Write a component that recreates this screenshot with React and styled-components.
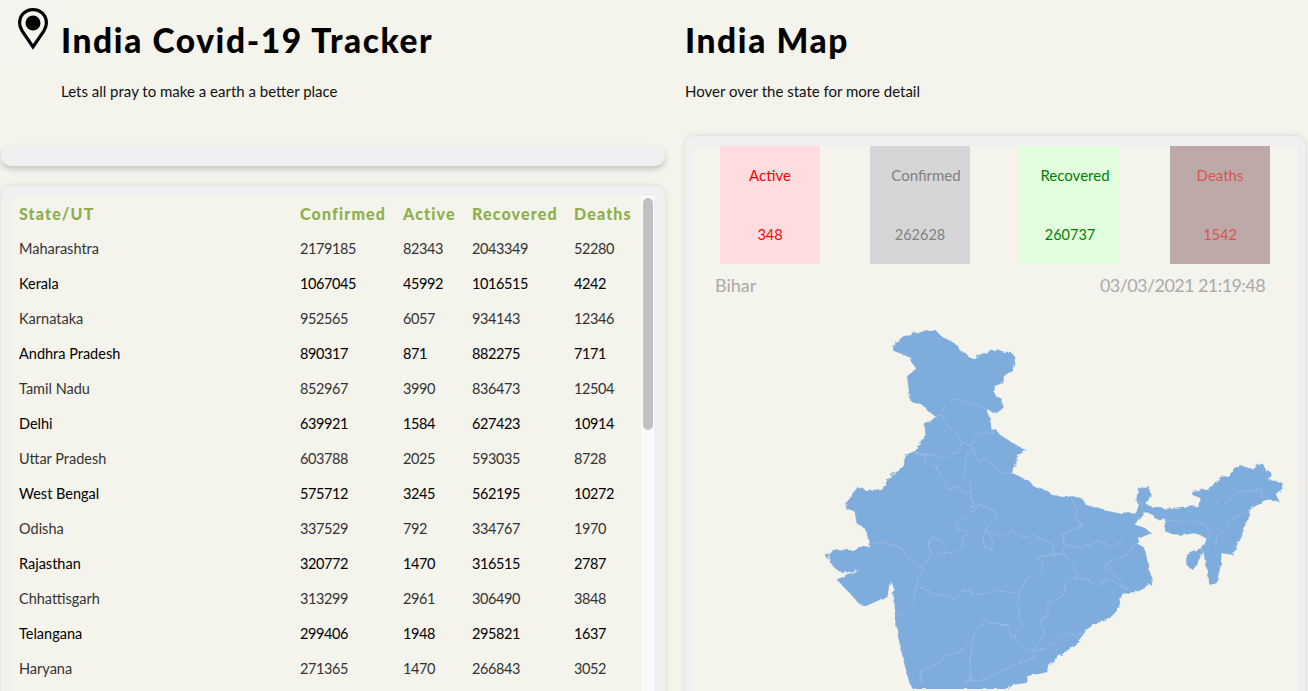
import React from "react";
import styled, { createGlobalStyle } from "styled-components";

const GlobalStyle = createGlobalStyle`
  html, body {
    margin: 0;
    padding: 0;
    height: 691px;
    overflow: hidden;
    background-color: #f4f3ec;
    font-family: Lato, "Open Sans", sans-serif;
  }
`;

const Page = styled.div`
  display: grid;
  grid-template-columns: 664px 620px;
  column-gap: 20px;
  padding-left: 1px;
  height: 691px;
  overflow: hidden;
`;

const Column = styled.div`
  display: flex;
  flex-direction: column;
  min-width: 0;
`;

const Header = styled.header`
  height: ${(p) => p.$height}px;
  flex: none;
  display: flex;
`;

const PinBox = styled.div`
  width: 60px;
  height: 60px;
  margin-left: -1px;
  margin-right: 1px;
  flex: none;
  background-color: #f5f4ee;
  padding: 8px 0 0 18px;
  box-sizing: border-box;
`;

const Title = styled.h1`
  margin: 21px 0 0;
  font-size: 33.5px;
  line-height: 38px;
  font-weight: 900;
  color: #000;
  letter-spacing: 1.6px;
  white-space: nowrap;
`;

const Subtitle = styled.p`
  margin: 23px 0 0;
  font-size: 15px;
  line-height: 18px;
  color: #111;
  white-space: nowrap;
`;

const TitleBlock = styled.div`
  padding-left: ${(p) => p.$indent || 0}px;
`;

const SearchBar = styled.div`
  height: 20px;
  flex: none;
  background-color: #f0f0f0;
  border-radius: 10px;
  box-shadow: 0 3px 6px rgba(0, 0, 0, 0.2);
  margin-bottom: 20px;
`;

const Panel = styled.section`
  flex: 1;
  border-radius: 10px;
  background-color: #f0f0f0;
  padding: 10px 11px 0 10px;
  box-shadow: 0 0 6px rgba(0, 0, 0, 0.12);
  display: flex;
  min-height: 0;
`;

const TableArea = styled.div`
  flex: 1;
  background-color: #f4f3ec;
  padding: 0 0 0 8px;
  height: 600px;
`;

const Table = styled.table`
  border-collapse: collapse;
  table-layout: fixed;
  width: 100%;
  margin-top: -1px;
`;

const HeadCell = styled.th`
  width: ${(p) => p.$width}px;
  padding: 0;
  height: 36px;
  text-align: left;
  font-size: 16px;
  font-weight: 900;
  color: #8db04a;
  letter-spacing: 1.15px;
  white-space: nowrap;
`;

const Row = styled.tr`
  color: ${(p) => (p.$even ? "#000" : "#333")};
`;

const Cell = styled.td`
  padding: 0;
  height: 35px;
  font-size: 14.5px;
  letter-spacing: ${(p) => (p.$num ? "-0.43px" : "0")};
  white-space: nowrap;
`;

const ScrollTrack = styled.div`
  width: 13px;
  flex: none;
  background-color: #fafafa;
  padding: 2px 1px 0 2px;
  box-sizing: border-box;
`;

const ScrollThumb = styled.div`
  height: 232px;
  border-radius: 5px;
  background-color: #c1c1c1;
`;

const MapPanel = styled.section`
  flex: 1;
  border-radius: 10px;
  background-color: #f0f0f0;
  padding: 10px 8px 0 9px;
  box-shadow: 0 0 6px rgba(0, 0, 0, 0.12);
`;

const MapInner = styled.div`
  background-color: #f4f3ec;
  height: 600px;
`;

const Stats = styled.div`
  display: flex;
  gap: 50px;
  padding-left: 26px;
`;

const StatBox = styled.div`
  width: 100px;
  height: 118px;
  background-color: ${(p) => p.$bg};
  color: ${(p) => p.$color};
  font-size: 15px;
  text-align: center;
  white-space: nowrap;
`;

const StatLabel = styled.div`
  padding-top: 20px;
  padding-left: ${(p) => p.$indent}px;
  line-height: 18px;
  height: 59px;
  box-sizing: border-box;
`;

const StatValue = styled.div`
  padding-top: 21px;
  line-height: 18px;
  font-size: 14.5px;
`;

const InfoRow = styled.div`
  display: flex;
  justify-content: space-between;
  padding: 9px 32px 0 21px;
  font-size: 18px;
  line-height: 24px;
  color: #aaa;
`;

const DateText = styled.span`
  letter-spacing: -0.58px;
`;

const MapSvg = styled.svg`
  display: block;
  margin: 31px 0 0 129px;
`;

const rows = [
  ["Maharashtra", 2179185, 82343, 2043349, 52280],
  ["Kerala", 1067045, 45992, 1016515, 4242],
  ["Karnataka", 952565, 6057, 934143, 12346],
  ["Andhra Pradesh", 890317, 871, 882275, 7171],
  ["Tamil Nadu", 852967, 3990, 836473, 12504],
  ["Delhi", 639921, 1584, 627423, 10914],
  ["Uttar Pradesh", 603788, 2025, 593035, 8728],
  ["West Bengal", 575712, 3245, 562195, 10272],
  ["Odisha", 337529, 792, 334767, 1970],
  ["Rajasthan", 320772, 1470, 316515, 2787],
  ["Chhattisgarh", 313299, 2961, 306490, 3848],
  ["Telangana", 299406, 1948, 295821, 1637],
  ["Haryana", 271365, 1470, 266843, 3052],
];

const outline =
  "280,95 283,82 300,65 310,55 335,52 338,44 352,47 380,37 392,40 408,37 420,50 432,60 445,65 462,75 475,85 482,98 497,105 510,120 525,120 545,108 570,100 595,95 612,102 632,102 647,118 643,135 637,160 625,165 612,175 610,195 585,203 583,222 590,237 605,240 606,258 612,268 600,278 590,285 578,283 565,273 560,280 572,300 575,335 590,335 600,350 615,360 635,372 650,382 680,397 660,408 650,420 650,437 640,450 637,467 655,475 690,490 700,505 720,512 745,520 755,530 790,538 820,535 850,545 858,560 880,568 900,570 920,578 965,588 985,583 1005,588 1012,580 1018,560 1010,550 1015,515 1030,507 1048,505 1052,530 1045,550 1040,560 1060,568 1085,568 1097,573 1150,567 1200,565 1203,540 1178,530 1180,518 1230,515 1245,495 1262,478 1290,472 1305,450 1322,442 1360,455 1375,442 1390,437 1398,460 1413,462 1408,487 1432,490 1450,495 1450,510 1428,528 1440,553 1425,545 1400,545 1385,552 1350,575 1345,610 1330,630 1327,655 1312,680 1300,710 1265,705 1264,740 1255,775 1250,795 1230,800 1225,765 1215,720 1212,700 1195,730 1190,745 1180,755 1165,745 1160,725 1165,705 1190,695 1210,690 1222,662 1190,645 1150,650 1120,648 1097,640 1095,600 1080,607 1065,600 1060,590 1040,582 1030,585 1018,600 1005,620 1035,630 1055,645 1020,660 1010,675 1035,690 1045,740 1055,780 1058,805 1045,795 1035,810 1015,820 985,825 955,838 962,865 945,885 925,905 890,915 865,930 850,950 830,975 800,1000 770,1020 745,1040 743,1062 715,1068 690,1072 675,1095 640,1100 625,1113 340,1113 330,1095 318,1050 305,1000 295,950 287,905 290,880 280,840 285,815 275,790 268,800 265,830 240,845 200,863 180,858 150,825 112,785 145,768 165,765 180,755 130,765 105,750 90,730 90,710 103,693 145,697 165,695 190,688 208,685 210,670 195,630 172,618 165,580 137,570 140,548 160,525 175,508 190,510 200,522 225,516 248,512 265,485 275,470 298,458 312,435 320,410 345,400 360,375 378,350 375,318 395,308 410,295 385,280 375,265 333,248 327,210 322,175 350,152 337,135 335,120 300,105 282,98";

const borders = [
  "410,295 425,290 437,260 465,242 490,250 530,258 550,272 565,275",
  "425,290 445,325 470,345 485,370 520,385",
  "520,385 525,350 550,345 585,345",
  "520,385 528,415 540,428 555,420 580,440 605,465 637,465",
  "520,390 498,420 495,465 485,480 510,490 515,520 490,525 480,505 445,515 440,490 420,470 410,440 375,435 372,412 345,405",
  "485,375 475,400 440,420 410,415 385,410 345,405",
  "510,520 522,560 510,568 545,562 585,575 590,595 560,630 550,660 555,690 575,695 580,670 565,640 585,650 620,652 640,640 670,660 700,650 760,680 763,710",
  "763,710 790,705 795,680 790,650 850,620 825,600 835,575 815,540",
  "545,562 470,615 470,635 510,640 490,660 485,695 420,712 440,680 405,660 385,670 395,710 370,750",
  "205,678 250,672 305,690 325,720 370,750",
  "370,750 355,780 350,810 340,830 350,840 320,885 295,890",
  "355,805 410,830 450,832 460,845 490,820 515,815 520,830 600,820 660,825",
  "660,825 680,780 725,760 730,735 710,715 763,710",
  "790,705 820,735 835,770 800,790 790,835 745,855 745,900 720,900 735,945 710,985 700,1000",
  "660,825 655,860 660,900 672,925 645,945 648,960 680,995 705,1000",
  "820,780 870,785 875,798 910,800 920,780 950,795 985,815",
  "795,680 850,690 900,670 935,685 965,670 975,650 1005,630",
  "1000,680 990,705 910,740 945,770 985,815",
  "705,1000 745,985 770,975 800,940 830,955 855,940",
  "525,945 555,908 600,920 625,920 635,955 648,960",
  "525,945 515,975 480,1000 430,1020 420,1035 365,1060 365,1100",
  "520,975 510,1030 515,1090 495,1090 560,1085 600,1060 650,1040 700,1020 705,1000",
  "1097,605 1130,610 1180,605 1215,620 1235,650 1205,695 1215,715",
  "1240,562 1280,555 1310,525 1385,512 1390,545",
  "1350,575 1300,600 1280,630 1260,640 1245,690",
  "1010,550 1040,558",
];

// the outline is hand traced, the filter gives it the rough edge of the real map
const IndiaMap = () => (
  <MapSvg width="463.3" height="361" viewBox="70 30 1390 1083">
    <defs>
      <filter id="rough" x="0" y="0" width="100%" height="100%">
        <feTurbulence type="fractalNoise" baseFrequency="0.06" numOctaves="2" seed="4" />
        <feDisplacementMap in="SourceGraphic" scale="12" />
      </filter>
    </defs>
    <g filter="url(#rough)">
      <polygon points={outline} fill="#7eacdd" stroke="#7eacdd" strokeWidth="1" />
      <polygon points="76,712 88,710 84,724" fill="#7eacdd" />
      {borders.map((line) => (
        <polyline key={line} points={line} fill="none" stroke="#a3c3e6" strokeWidth="2" />
      ))}
    </g>
  </MapSvg>
);

const Pin = () => (
  <svg width="30" height="42" viewBox="0 0 30 42" style={{ display: "block" }}>
    <path
      d="M15 1.600C7.300 1.600 1.600 7.500 1.600 15c0 3 1 5.400 2.500 7.800L15 39l10.900-16.200c1.500-2.400 2.500-4.800 2.500-7.800C28.400 7.500 22.700 1.600 15 1.600z"
      fill="none"
      stroke="#000"
      strokeWidth="3.200"
    />
    <circle cx="15" cy="15" r="7.500" fill="#000" />
  </svg>
);

const App = () => (
  <>
    <GlobalStyle />
    <Page>
      <Column>
        <Header $height={146}>
          <PinBox>
            <Pin />
          </PinBox>
          <TitleBlock>
            <Title>India Covid-19 Tracker</Title>
            <Subtitle>Lets all pray to make a earth a better place</Subtitle>
          </TitleBlock>
        </Header>
        <SearchBar />
        <Panel>
          <TableArea>
            <Table>
              <thead>
                <tr>
                  <HeadCell $width={281}>State/UT</HeadCell>
                  <HeadCell $width={103}>Confirmed</HeadCell>
                  <HeadCell $width={69}>Active</HeadCell>
                  <HeadCell $width={102}>Recovered</HeadCell>
                  <HeadCell>Deaths</HeadCell>
                </tr>
              </thead>
              <tbody>
                {rows.map((r, i) => (
                  <Row key={r[0]} $even={i % 2 === 1}>
                    {r.map((v, j) => (
                      <Cell key={j} $num={j > 0}>
                        {v}
                      </Cell>
                    ))}
                  </Row>
                ))}
              </tbody>
            </Table>
          </TableArea>
          <ScrollTrack>
            <ScrollThumb />
          </ScrollTrack>
        </Panel>
      </Column>
      <Column>
        <Header $height={136}>
          <TitleBlock>
            <Title>India Map</Title>
            <Subtitle>Hover over the state for more detail</Subtitle>
          </TitleBlock>
        </Header>
        <MapPanel>
          <MapInner>
            <Stats>
              <StatBox $bg="#ffdcdf" $color="#ff0000">
                <StatLabel $indent={0}>Active</StatLabel>
                <StatValue>348</StatValue>
              </StatBox>
              <StatBox $bg="#d6d6d8" $color="#808080">
                <StatLabel $indent={12}>Confirmed</StatLabel>
                <StatValue>262628</StatValue>
              </StatBox>
              <StatBox $bg="#e3fede" $color="#008000">
                <StatLabel $indent={10}>Recovered</StatLabel>
                <StatValue>260737</StatValue>
              </StatBox>
              <StatBox $bg="#bea9a9" $color="#d9534f">
                <StatLabel $indent={0}>Deaths</StatLabel>
                <StatValue>1542</StatValue>
              </StatBox>
            </Stats>
            <InfoRow>
              <span>Bihar</span>
              <DateText>03/03/2021 21:19:48</DateText>
            </InfoRow>
            <IndiaMap />
          </MapInner>
        </MapPanel>
      </Column>
    </Page>
  </>
);

export default App;
